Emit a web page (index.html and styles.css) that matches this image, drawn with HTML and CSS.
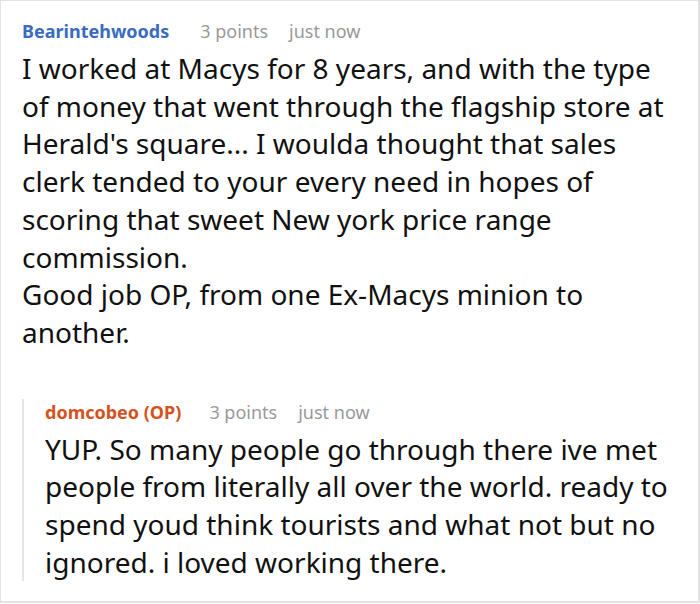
FILE: index.html
```html
<!DOCTYPE html>
<html>
<head>
<meta charset="utf-8">
<link rel="stylesheet" href="styles.css">
</head>
<body>
<div class="frame">
  <div class="comment">
    <div class="meta">
      <span class="author">Bearintehwoods</span>
      <span class="points">3 points</span>
      <span class="time">just now</span>
    </div>
    <div class="body">
      <p>I worked at Macys for 8 years, and with the type of money that went through the flagship store at Herald's square... I woulda thought that sales clerk tended to your every need in hopes of scoring that sweet New york price range commission.</p>
      <p>Good job OP, from one Ex-Macys minion to another.</p>
    </div>
    <div class="reply">
      <div class="meta">
        <span class="author op">domcobeo (OP)</span>
        <span class="points">3 points</span>
        <span class="time">just now</span>
      </div>
      <div class="body">
        <p>YUP. So many people go through there ive met people from literally all over the world. ready to spend youd think tourists and what not but no ignored. i loved working there.</p>
      </div>
    </div>
  </div>
</div>
</body>
</html>
```

FILE: styles.css
```css
html, body {
  margin: 0;
  padding: 0;
  background: #fff;
}
.frame {
  box-sizing: border-box;
  width: 700px;
  height: 603px;
  border-top: 1px solid #e3e3e3;
  border-left: 1px solid #e3e3e3;
  border-right: 2px solid #e3e3e3;
  border-bottom: 2px solid #e3e3e3;
  overflow: hidden;
  font-family: "Noto Sans", sans-serif;
  color: #111;
}
.comment {
  padding: 17px 20px 0 21px;
}
.meta {
  display: flex;
  font-size: 18px;
  line-height: 26px;
}
.author {
  font-weight: 700;
  color: #3a6bbf;
  margin-right: 31px;
}
.author.op {
  color: #d4521e;
  margin-right: 28px;
}
.points, .time {
  color: #999;
}
.points {
  margin-right: 21px;
}
.body {
  font-size: 28px;
  line-height: 37.7px;
  margin-top: 6px;
}
.body p {
  margin: 0;
}
.reply {
  margin-top: 59px;
  border-left: 2px solid #e6e6e6;
  padding-left: 21px;
}
.reply .meta {
  margin-top: -12px;
}
```
